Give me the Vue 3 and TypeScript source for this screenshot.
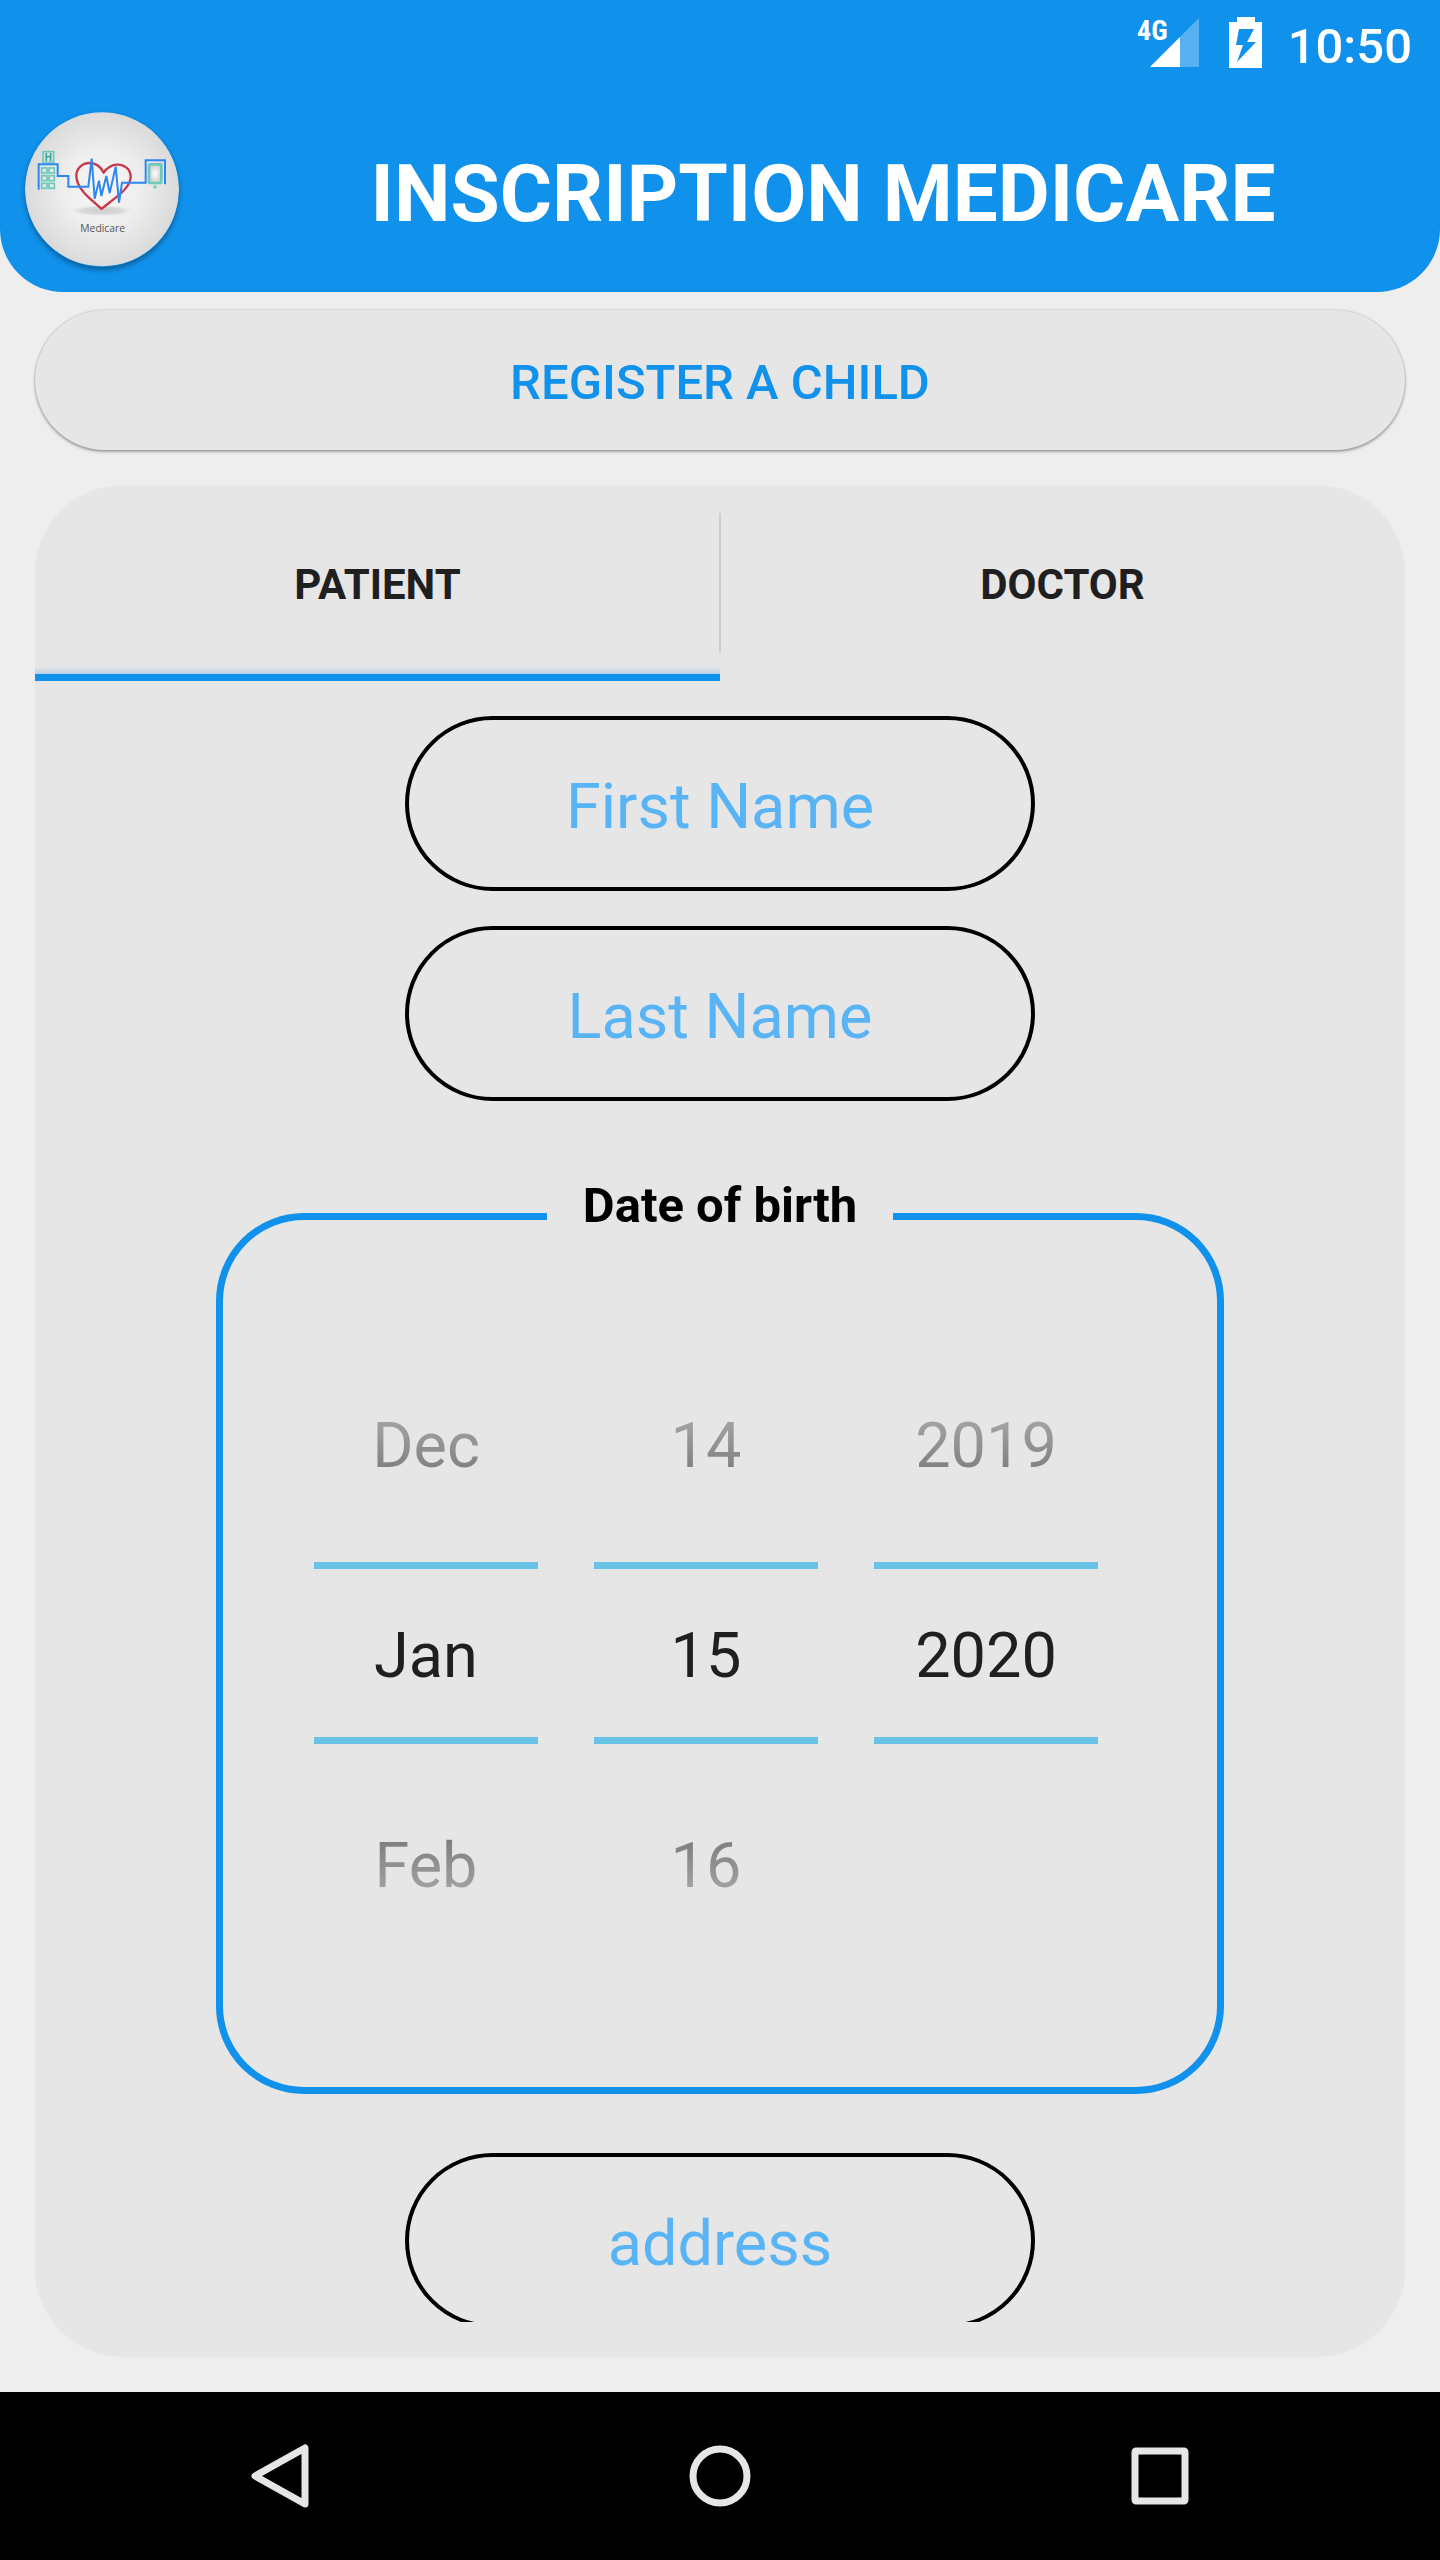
<script setup lang="ts">
import { computed, ref } from 'vue'

type Role = 'patient' | 'doctor'

interface Wheel {
  id: string
  label: string
  previous: string
  current: string
  next: string
}

interface Field {
  id: string
  hint: string
}

const tabs: { id: Role; label: string }[] = [
  { id: 'patient', label: 'PATIENT' },
  { id: 'doctor', label: 'DOCTOR' },
]
const activeTab = ref<Role>('patient')

const nameFields: Field[] = [
  { id: 'first-name', hint: 'First Name' },
  { id: 'last-name', hint: 'Last Name' },
]
const values = ref<Record<string, string>>({})

const months = ['Jan', 'Feb', 'Mar', 'Apr', 'May', 'Jun', 'Jul', 'Aug', 'Sep', 'Oct', 'Nov', 'Dec']
const maxYear = 2020
const month = ref(0)
const day = ref(15)
const year = ref(2020)

const daysInMonth = computed(() => new Date(year.value, month.value + 1, 0).getDate())
const wrap = (n: number, size: number): number => (n + size) % size

const wheels = computed<Wheel[]>(() => [
  {
    id: 'month',
    label: 'Month',
    previous: months[wrap(month.value - 1, 12)],
    current: months[month.value],
    next: months[wrap(month.value + 1, 12)],
  },
  {
    id: 'day',
    label: 'Day',
    previous: String(wrap(day.value - 2, daysInMonth.value) + 1),
    current: String(day.value),
    next: String(wrap(day.value, daysInMonth.value) + 1),
  },
  {
    id: 'year',
    label: 'Year',
    previous: String(year.value - 1),
    current: String(year.value),
    next: year.value < maxYear ? String(year.value + 1) : '',
  },
])

function spin(id: string, step: number): void {
  if (id === 'month') month.value = wrap(month.value + step, 12)
  else if (id === 'day') day.value = wrap(day.value - 1 + step, daysInMonth.value) + 1
  else year.value = Math.min(maxYear, year.value + step)
  day.value = Math.min(day.value, daysInMonth.value)
}
</script>

<template>
  <div class="screen">
    <header class="top">
      <div class="status">
        <svg class="signal" width="68" height="68" viewBox="-4 -8 68 68" role="img" aria-label="Signal">
          <path class="faint" d="M62 2V51H13z" />
          <path d="M43 21V51H13z" />
          <text x="0" y="24">4G</text>
        </svg>
        <svg class="battery" width="33" height="51" viewBox="0 0 33 51" role="img" aria-label="Charging">
          <path
            fill-rule="evenodd"
            d="M8 0H26V5H33V51H0V5H8zM10 12L7 28H14L8 45L27 25H18L25 12z"
          />
        </svg>
        <time class="clock">10:50</time>
      </div>
      <div class="bar">
        <svg class="logo" viewBox="75 67 462 463" role="img" aria-label="Medicare logo">
          <defs>
            <radialGradient id="disc" cx="50%" cy="50%" r="50%">
              <stop offset="0" stop-color="#f7f7f7" />
              <stop offset="0.5" stop-color="#eeeeee" />
              <stop offset="1" stop-color="#dadada" />
            </radialGradient>
            <radialGradient id="ground">
              <stop offset="0" stop-color="#cfcfcf" />
              <stop offset="0.6" stop-color="#d8d8d8" />
              <stop offset="1" stop-color="#e8e8e8" stop-opacity="0" />
            </radialGradient>
            <radialGradient id="glass">
              <stop offset="0" stop-color="#ffffff" />
              <stop offset="1" stop-color="#cfcfcf" />
            </radialGradient>
          </defs>
          <circle cx="306" cy="298" r="231" fill="url(#disc)" />
          <ellipse cx="306" cy="362" rx="98" ry="17" fill="url(#ground)" />
          <g fill="none" stroke="#6cc9bb" stroke-width="5">
            <rect x="129" y="185" width="32" height="32" />
            <rect x="125" y="234" width="16" height="15" />
            <rect x="147" y="234" width="16" height="15" />
            <rect x="125" y="257" width="16" height="15" />
            <rect x="147" y="257" width="16" height="15" />
            <rect x="125" y="280" width="16" height="15" />
            <rect x="147" y="280" width="16" height="15" />
          </g>
          <text class="mark" x="145" y="212" text-anchor="middle">H</text>
          <rect x="447" y="223" width="37" height="56" rx="3" fill="url(#glass)" stroke="#6cc9bb" stroke-width="8" />
          <circle cx="465" cy="291" r="5" fill="#6cc9bb" />
          <path
            d="M305 357C282 334 229 300 229 257C229 235 247 219 269 219C289 219 302 230 311 248C320 233 337 223 353 224C376 225 392 239 392 260C392 298 334 330 305 357Z"
            fill="none"
            stroke="#c83a49"
            stroke-width="7"
            stroke-linejoin="round"
          />
          <path
            d="M116 299V223H173V258H205V290H265L275 206L284 326L297 272L304 318L319 258L329 309L347 230L357 338L366 278H437V211H495V283"
            fill="none"
            stroke="#2f86ee"
            stroke-width="6"
          />
          <text class="brand" x="308" y="427" text-anchor="middle">Medicare</text>
        </svg>
        <h1>INSCRIPTION MEDICARE</h1>
      </div>
    </header>

    <main>
      <button class="child" type="button">REGISTER A CHILD</button>

      <section class="card">
        <div class="tabs" role="tablist">
          <button
            v-for="tab in tabs"
            :key="tab.id"
            type="button"
            role="tab"
            class="tab"
            :class="{ active: tab.id === activeTab }"
            :aria-selected="tab.id === activeTab"
            @click="activeTab = tab.id"
          >
            {{ tab.label }}
          </button>
        </div>

        <form class="form" @submit.prevent>
          <input
            v-for="field in nameFields"
            :id="field.id"
            :key="field.id"
            v-model="values[field.id]"
            class="field"
            type="text"
            :placeholder="field.hint"
            :aria-label="field.hint"
          />

          <fieldset class="birth">
            <legend>Date of birth</legend>
            <div class="wheels">
              <div v-for="wheel in wheels" :key="wheel.id" class="wheel">
                <button
                  type="button"
                  class="step before"
                  @click="spin(wheel.id, -1)"
                >
                  <span>{{ wheel.previous }}</span>
                </button>
                <input class="value" type="text" readonly :value="wheel.current" :aria-label="wheel.label" />
                <button
                  type="button"
                  class="step after"
                  :disabled="!wheel.next"
                  @click="spin(wheel.id, 1)"
                >
                  <span>{{ wheel.next }}</span>
                </button>
              </div>
            </div>
          </fieldset>

          <input
            id="address"
            v-model="values.address"
            class="field"
            type="text"
            placeholder="address"
            aria-label="address"
          />
        </form>
      </section>
    </main>

    <nav class="system">
      <button type="button" aria-label="Back">
        <svg width="72" height="72" viewBox="0 0 72 72">
          <path d="M61 8V64L11 36z" />
        </svg>
      </button>
      <button type="button" aria-label="Home">
        <svg width="72" height="72" viewBox="0 0 72 72">
          <circle cx="36" cy="36" r="27" />
        </svg>
      </button>
      <button type="button" aria-label="Recent apps">
        <svg width="72" height="72" viewBox="0 0 72 72">
          <rect x="11" y="11" width="50" height="50" rx="1" />
        </svg>
      </button>
    </nav>
  </div>
</template>

<style>
body {
  margin: 0;
  background: #eeeeee;
}
</style>

<style scoped>
.screen {
  display: flex;
  flex-direction: column;
  height: 100vh;
  background: #eeeeee;
  font-family: Roboto, 'Liberation Sans', sans-serif;
  color: #1f1f1f;
}

.screen *,
.screen *::before {
  box-sizing: border-box;
}

button,
input {
  margin: 0;
  padding: 0;
  border: 0;
  background: none;
  font-family: inherit;
  color: inherit;
  text-align: center;
  outline: none;
}

.top {
  flex: none;
  background: #1091eb;
  border-radius: 0 0 63px 63px;
  color: #ffffff;
}

.status {
  display: flex;
  justify-content: flex-end;
  align-items: center;
  height: 84px;
  padding-right: 28px;
}

.signal,
.battery {
  fill: #ffffff;
}

.signal {
  margin-right: 28px;
}

.signal .faint {
  fill: #58b2f1;
}

.signal text {
  font-family: 'Roboto Condensed', 'Liberation Sans Narrow', Roboto, sans-serif;
  font-size: 28px;
  font-weight: 700;
}

.battery {
  margin-right: 26px;
}

.clock {
  font-size: 49px;
  line-height: 58px;
  font-weight: 500;
  padding-top: 10px;
}

.bar {
  display: flex;
  align-items: center;
  padding: 28px 0 25px 25px;
}

.logo {
  flex: none;
  width: 154px;
  height: 155px;
  margin-right: 27px;
  border-radius: 50%;
  box-shadow: 0 3px 5px rgba(0, 0, 0, 0.35);
}

.logo .mark {
  font-size: 30px;
  font-weight: 700;
  fill: #2f9f94;
}

.logo .brand {
  font-family: 'Open Sans', 'Noto Sans', sans-serif;
  font-size: 31px;
  fill: #555555;
}

h1 {
  flex: 1;
  margin: 0;
  padding-top: 8px;
  font-size: 80px;
  line-height: 94px;
  font-weight: 700;
  text-align: center;
}

main {
  display: flex;
  flex-direction: column;
  flex: 1;
  min-height: 0;
  gap: 35px;
  padding: 18px 35px 35px;
}

.child {
  flex: none;
  height: 140px;
  border-radius: 70px;
  background: #e6e6e6;
  box-shadow: 0 0 2px rgba(0, 0, 0, 0.25), 0 2px 3px rgba(0, 0, 0, 0.3);
  color: #1091eb;
  font-size: 49px;
  line-height: 58px;
  font-weight: 500;
  padding-top: 5px;
}

.card {
  display: flex;
  flex-direction: column;
  flex: 1;
  min-height: 0;
  padding-bottom: 35px;
  border-radius: 88px;
  background: #e6e6e6;
}

.tabs {
  display: flex;
  flex: none;
  height: 196px;
}

.tab {
  position: relative;
  flex: 1;
  padding-top: 4px;
  font-size: 42px;
  line-height: 50px;
  font-weight: 700;
}

.tab.active {
  border-bottom: 7px solid #1091eb;
  padding-top: 11px;
  background: linear-gradient(to top, #b9d3e6, #e6e6e6) bottom / 100% 7px no-repeat;
}

.tab + .tab::before {
  content: '';
  position: absolute;
  left: -1px;
  top: 28px;
  bottom: 28px;
  width: 2px;
  background: #cccccc;
}

.form {
  display: flex;
  flex-direction: column;
  align-items: center;
  flex: 1;
  min-height: 0;
  padding-top: 35px;
  overflow-y: auto;
  scrollbar-width: none;
}

.field {
  flex: none;
  width: 630px;
  max-width: 90%;
  height: 175px;
  border: 4px solid #000000;
  border-radius: 88px;
  padding-top: 5px;
  font-size: 63px;
}

.field + .field {
  margin-top: 35px;
}

.field::placeholder {
  color: #58b4f4;
  opacity: 1;
}

.birth {
  flex: none;
  width: 1008px;
  max-width: 94%;
  margin: 74px 0 59px;
  padding: 83px 0 121px;
  border: 7px solid #1091eb;
  border-radius: 88px;
}

legend {
  margin: 0 auto;
  padding: 1px 36px 21px;
  font-size: 49px;
  line-height: 60px;
  font-weight: 700;
  color: #000000;
}

.wheels {
  display: flex;
  justify-content: center;
  gap: 56px;
  padding-right: 28px;
}

.wheel {
  display: flex;
  flex-direction: column;
  gap: 16px;
  width: 224px;
}

.step,
.value {
  width: 100%;
  padding-top: 5px;
  font-size: 63px;
}

.step {
  height: 206px;
}

.step span {
  display: block;
  line-height: 74px;
  color: transparent;
  background-clip: text;
  -webkit-background-clip: text;
}

.before span {
  background-image: linear-gradient(#ababab, #777777);
}

.after span {
  background-image: linear-gradient(#777777, #ababab);
}

.value {
  height: 182px;
  border-top: 7px solid #67c3e5;
  border-bottom: 7px solid #67c3e5;
}

.system {
  display: flex;
  flex: none;
  justify-content: center;
  align-items: center;
  height: 168px;
  background: #000000;
}

.system button {
  width: 440px;
  height: 168px;
}

.system svg {
  display: block;
  margin: 0 auto;
  fill: none;
  stroke: #e6e6e6;
  stroke-width: 7;
  stroke-linejoin: round;
}
</style>
